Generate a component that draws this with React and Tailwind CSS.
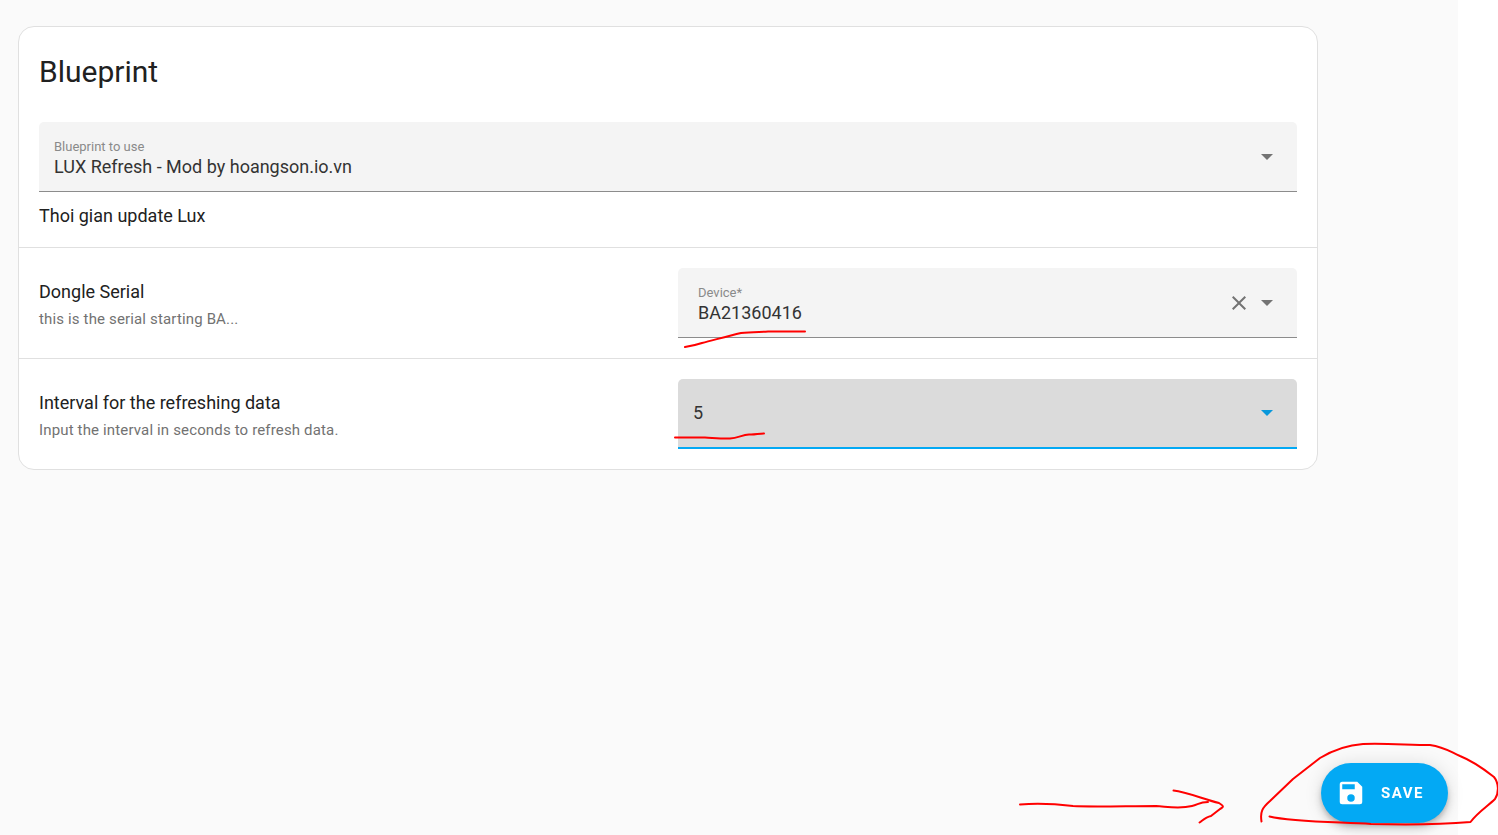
import { useState } from 'react';

const BLUEPRINTS = ['LUX Refresh - Mod by hoangson.io.vn'];
const INTERVALS = ['5', '10', '15', '30', '60'];

function Caret() {
  return (
    <svg viewBox="0 0 12 6" className="pointer-events-none h-[6px] w-[12px]" fill="currentColor" aria-hidden="true">
      <path d="M0 0h12L6 6z" />
    </svg>
  );
}

function Stroke({ viewBox, className, children }) {
  return (
    <svg
      viewBox={viewBox}
      className={`pointer-events-none ${className}`}
      fill="none"
      stroke="#ff0000"
      strokeWidth="2"
      strokeLinecap="round"
      strokeLinejoin="round"
      aria-hidden="true"
    >
      {children}
    </svg>
  );
}

function SettingsRow({ title, description, children }) {
  return (
    <div className="grid grid-cols-2 items-center gap-5 border-t border-[#e0e0e0] p-5">
      <div className="pt-1">
        <h2 className="text-[18px] leading-[28px] text-[#212121]">{title}</h2>
        <p className="text-[15px] leading-[26px] tracking-[0.01em] text-[#727272]">{description}</p>
      </div>
      {children}
    </div>
  );
}

export default function App() {
  const [blueprint, setBlueprint] = useState(BLUEPRINTS[0]);
  const [device, setDevice] = useState('BA21360416');
  const [interval, setInterval] = useState('5');

  return (
    <div className="flex min-h-screen bg-white pr-10 font-['Roboto',sans-serif]">
      <main className="flex-1 bg-[#fafafa] pt-[26px] pr-[140px] pl-[18px]">
        <section className="flex flex-col rounded-2xl border border-[#e0e0e0] bg-white">
          <div className="flex flex-col p-5">
            <h1 className="pb-[25px] text-[30px] leading-[50px] text-[#212121]">Blueprint</h1>

            <div className="flex h-[70px] items-center gap-[10px] rounded-t-[5px] border-b border-[#8c8c8c] bg-[#f4f4f4] pr-6 pl-[15px] text-[#737373]">
              <div className="flex flex-1 flex-col">
                <label htmlFor="blueprint" className="text-[13px] leading-[20px] text-[#8a8a8a]">
                  Blueprint to use
                </label>
                <select
                  id="blueprint"
                  value={blueprint}
                  onChange={(e) => setBlueprint(e.target.value)}
                  className="appearance-none text-[18px] leading-[20px] text-[#333333] outline-none"
                >
                  {BLUEPRINTS.map((name) => (
                    <option key={name}>{name}</option>
                  ))}
                </select>
              </div>
              <Caret />
            </div>

            <p className="pt-3 text-[18px] leading-[23px] text-[#212121]">Thoi gian update Lux</p>
          </div>

          <SettingsRow title="Dongle Serial" description="this is the serial starting BA...">
            <div className="relative flex h-[70px] items-center gap-[10px] rounded-t-[5px] border-b border-[#8c8c8c] bg-[#f4f4f4] pr-6 pl-5 text-[#737373]">
              <div className="flex flex-1 flex-col">
                <label htmlFor="device" className="text-[13px] leading-[20px] text-[#8a8a8a]">
                  Device*
                </label>
                <input
                  id="device"
                  type="text"
                  value={device}
                  onChange={(e) => setDevice(e.target.value)}
                  className="text-[18px] leading-[20px] text-[#333333] outline-none"
                />
              </div>
              <button type="button" aria-label="Clear" onClick={() => setDevice('')} className="cursor-pointer">
                <svg viewBox="0 0 24 24" className="h-6 w-6" fill="currentColor" aria-hidden="true">
                  <path d="M19 6.41L17.59 5 12 10.59 6.41 5 5 6.41 10.59 12 5 17.59 6.41 19 12 13.41 17.59 19 19 17.59 13.41 12z" />
                </svg>
              </button>
              <Caret />
              <Stroke viewBox="0 0 130 24" className="absolute top-[60px] left-0 h-[24px] w-[130px]">
                <path d="M7 19C13 18 18 17 24 15C36 12 50 8 63 5C73 4 82 4 90 3.500H127" />
              </Stroke>
            </div>
          </SettingsRow>

          <SettingsRow
            title="Interval for the refreshing data"
            description="Input the interval in seconds to refresh data."
          >
            <div className="relative flex h-[70px] items-center gap-[10px] rounded-t-[5px] border-b-2 border-[#03a9f4] bg-[#dbdbdb] pr-6 pl-[15px] text-[#0898db]">
              <select
                aria-label="Interval for the refreshing data"
                value={interval}
                onChange={(e) => setInterval(e.target.value)}
                className="flex-1 appearance-none text-[18px] leading-[20px] text-[#333333] outline-none"
              >
                {INTERVALS.map((value) => (
                  <option key={value}>{value}</option>
                ))}
              </select>
              <Caret />
              <Stroke viewBox="0 0 96 12" className="absolute top-[50px] -left-[6px] h-[12px] w-[96px]">
                <path d="M3 8.500H33C42 9 52 10 58 9.500C66 9 70 6 77 5.500C83 6 86 4.500 92 4.500" />
              </Stroke>
            </div>
          </SettingsRow>
        </section>
      </main>

      <button
        type="button"
        className="fixed right-[50px] bottom-3 flex h-[60px] cursor-pointer items-center gap-[15px] rounded-full bg-[#03a9f4] pr-6 pl-[15px] text-[15px] font-bold tracking-widest text-white shadow-[0_3px_5px_-1px_rgba(0,0,0,0.2),0_6px_10px_0_rgba(0,0,0,0.14),0_1px_18px_0_rgba(0,0,0,0.12)]"
      >
        <svg viewBox="0 0 24 24" className="h-[30px] w-[30px]" fill="currentColor" aria-hidden="true">
          <path d="M15 9H5V5h10m-3 14a3 3 0 0 1-3-3 3 3 0 0 1 3-3 3 3 0 0 1 3 3 3 3 0 0 1-3 3m5-16H5a2 2 0 0 0-2 2v14a2 2 0 0 0 2 2h14a2 2 0 0 0 2-2V7l-4-4z" />
        </svg>
        SAVE
      </button>

      <Stroke viewBox="0 0 500 95" className="fixed right-0 bottom-0 h-[95px] w-[500px]">
        <path d="M22 64.500C40 63 58 64 75 66C92 67 130 66 158 66C172 67 182 69 194 66C200 65 201 62 210 62" />
        <path d="M175.500 50.500C189 52 205 59 221 63C226 66 226 67 222 69L213 76C208 77 205 80 201.500 82.500" />
        <path d="M263.500 81.500C262 72 264 68 272 61L295 39L322 18C337 9 350 5 365 4C385 3 412 5 432 5C446 7 451 11 462 16C477 22 487 30 496 37C501 43 501 53 497 59C490 66 480 72 472.500 82C450 84 410 85 373 84C340 82 294 82 271.500 76.500" />
      </Stroke>
    </div>
  );
}
